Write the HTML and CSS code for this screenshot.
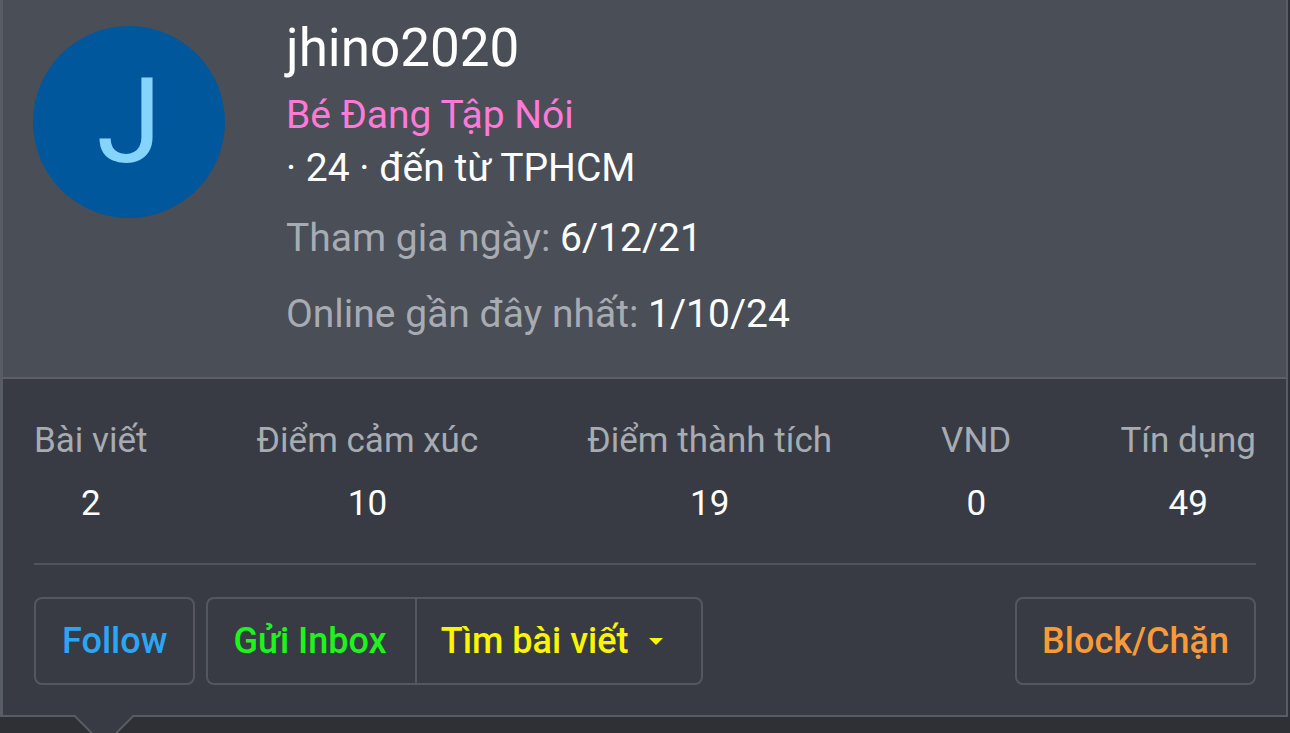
FILE: index.html
```html
<!DOCTYPE html>
<html lang="vi">
<head>
    <meta charset="UTF-8">
    <meta name="viewport" content="width=device-width, initial-scale=1.0">
    <title>jhino2020</title>
    <link rel="stylesheet" href="styles.css">
</head>
<body>
    <div class="member-card">
        <div class="card-header">
            <div class="avatar">J</div>
            <div class="member-info">
                <h1 class="username">jhino2020</h1>
                <div class="user-title">Bé Đang Tập Nói</div>
                <div class="user-blurb">· 24 · đến từ TPHCM</div>
                <div class="user-pair">Tham gia ngày: <span class="pair-value">6/12/21</span></div>
                <div class="user-pair pair-last">Online gần đây nhất: <span class="pair-value">1/10/24</span></div>
            </div>
        </div>

        <div class="card-body">
            <ul class="stats">
                <li class="stat"><span class="stat-label">Bài viết</span><span class="stat-value">2</span></li>
                <li class="stat"><span class="stat-label">Điểm cảm xúc</span><span class="stat-value">10</span></li>
                <li class="stat"><span class="stat-label">Điểm thành tích</span><span class="stat-value">19</span></li>
                <li class="stat"><span class="stat-label">VND</span><span class="stat-value">0</span></li>
                <li class="stat"><span class="stat-label">Tín dụng</span><span class="stat-value">49</span></li>
            </ul>

            <div class="actions">
                <button class="btn btn-follow">Follow</button>
                <div class="btn-group">
                    <button class="btn btn-inbox">Gửi Inbox</button>
                    <button class="btn btn-find">Tìm bài viết <span class="caret"></span></button>
                </div>
                <button class="btn btn-block">Block/Chặn</button>
            </div>
        </div>

        <!-- tooltip arrow -->
        <div class="card-arrow"></div>
    </div>
</body>
</html>
```

FILE: styles.css
```css
html {
    background-color: #2e3035;
}
body {
    margin: 0;
    min-height: 733px;
    background-color: #2e3035;
    font-family: Roboto, "Noto Sans", sans-serif;
    color: #fff;
}
.member-card {
    position: relative;
    width: 1283px;
    background-color: #383b43;
    border: 2px solid #585c64;
    border-left-width: 3px;
    border-top: none;
}
.card-header {
    display: flex;
    align-items: flex-start;
    padding: 15px 0 36px 30px;
    background-color: #4a4e57;
    border-bottom: 2px solid #5b5f67;
}
.avatar {
    flex: none;
    width: 192px;
    height: 192px;
    margin-top: 11px;
    border-radius: 50%;
    background-color: #00579c;
    color: #84d4fb;
    font-size: 118px;
    line-height: 192px;
    text-align: center;
}
.member-info {
    margin-left: 61px;
    font-size: 39px;
    line-height: 53px;
}
.username {
    margin: 0;
    font-size: 53px;
    font-weight: 400;
    line-height: 67px;
}
.user-title {
    margin-top: 7px;
    color: #ff7ad8;
}
.user-pair {
    margin-top: 17px;
    color: #a7abb2;
}
.user-pair.pair-last {
    margin-top: 23px;
}
.pair-value {
    color: #fff;
}
.card-body {
    padding: 35px 30px 30px 31px;
}
.stats {
    display: flex;
    justify-content: space-between;
    margin: 0;
    padding: 0 0 33px;
    list-style: none;
    border-bottom: 2px solid #50545c;
    font-size: 35px;
    line-height: 53px;
}
.stat {
    display: flex;
    flex-direction: column;
    align-items: center;
}
.stat-label {
    color: #a7abb2;
}
.stat-value {
    margin-top: 10px;
}
.actions {
    display: flex;
    margin-top: 32px;
}
.btn {
    height: 88px;
    padding: 0 26px;
    background-color: transparent;
    border: 2px solid #53575f;
    border-radius: 8px;
    font-family: inherit;
    font-size: 36px;
    font-weight: 500;
}
.btn-follow {
    color: #2ba6f6;
}
.btn-group {
    display: flex;
    margin-left: 11px;
}
.btn-group .btn-inbox {
    padding: 0 28px 0 25px;
    border-right: none;
    border-radius: 8px 0 0 8px;
    color: #1cf51c;
}
.btn-group .btn-find {
    display: flex;
    align-items: center;
    padding-right: 38px;
    padding-left: 24px;
    border-left: 2px solid #53575f;
    border-radius: 0 8px 8px 0;
    color: #fbf500;
}
.caret {
    width: 0;
    height: 0;
    margin-left: 21px;
    border-left: 7px solid transparent;
    border-right: 7px solid transparent;
    border-top: 7px solid #fbf500;
}
.btn-block {
    margin-left: auto;
    padding: 0 25px;
    color: #f99a38;
}
.card-arrow {
    position: absolute;
    z-index: 1;
    left: 80px;
    bottom: -23px;
    width: 42px;
    height: 42px;
    background-color: #383b43;
    border-right: 2px solid #585c64;
    border-bottom: 2px solid #585c64;
    box-sizing: border-box;
    transform: rotate(45deg);
}
```
